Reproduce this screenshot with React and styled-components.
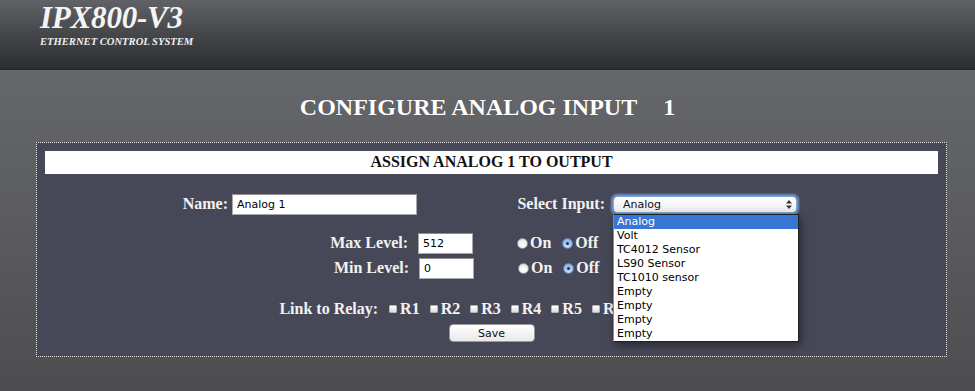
import React from 'react'
import styled, { createGlobalStyle } from 'styled-components'

const GlobalStyle = createGlobalStyle`
	html, body {
		margin: 0;
		padding: 0;
	}
	body {
		width: 975px;
		height: 391px;
		overflow: hidden;
		font-family: 'Liberation Serif', 'Times New Roman', serif;
		background: linear-gradient(to bottom, #6b6c71 0px, #5e5f63 180px, #4d4d4f 391px);
	}
`

const OPTIONS = ['Analog', 'Volt', 'TC4012 Sensor', 'LS90 Sensor', 'TC1010 sensor', 'Empty', 'Empty', 'Empty', 'Empty']
const RELAYS = ['R1', 'R2', 'R3', 'R4', 'R5', 'R6', 'R7', 'R8']

const App = () => {
	return (
		<Page>
			<GlobalStyle />
			<Header>
				<Logo>IPX800-V3</Logo>
				<Tagline>ETHERNET CONTROL SYSTEM</Tagline>
			</Header>
			<Title>
				CONFIGURE ANALOG INPUT<TitleNumber>1</TitleNumber>
			</Title>
			<Panel>
				<PanelBar>ASSIGN ANALOG 1 TO OUTPUT</PanelBar>
				<NameRow>
					<Label width={183}>Name:</Label>
					<TextInput width={185} defaultValue='Analog 1' />
					<Label width={188}>Select Input:</Label>
					<SelectWrap>
						<SelectBox>
							<span>Analog</span>
							<SelectArrows>
								<svg width='6' height='9' viewBox='0 0 6 9'>
									<path d='M3 0 L6 3.5 H0 Z M3 9 L6 5.5 H0 Z' fill='#333' />
								</svg>
							</SelectArrows>
						</SelectBox>
						<OptionList>
							{OPTIONS.map((o, i) => (
								<OptionItem key={i} selected={i === 0}>
									{o}
								</OptionItem>
							))}
						</OptionList>
					</SelectWrap>
				</NameRow>
				<LevelRow>
					<Label width={363}>Max Level:</Label>
					<TextInput width={55} defaultValue='512' />
					<RadioGroup>
						<RadioLabel>
							<Radio />
							On
						</RadioLabel>
						<RadioLabel>
							<Radio checked />
							Off
						</RadioLabel>
					</RadioGroup>
				</LevelRow>
				<LevelRow shift={1}>
					<Label width={363}>Min Level:</Label>
					<TextInput width={55} defaultValue='0' />
					<RadioGroup>
						<RadioLabel>
							<Radio />
							On
						</RadioLabel>
						<RadioLabel>
							<Radio checked />
							Off
						</RadioLabel>
					</RadioGroup>
				</LevelRow>
				<RelayRow>
					<RelayTitle>Link to Relay:</RelayTitle>
					{RELAYS.map(r => (
						<RelayItem key={r}>
							<CheckBox />
							{r}
						</RelayItem>
					))}
				</RelayRow>
				<ButtonRow>
					<SaveButton>Save</SaveButton>
				</ButtonRow>
			</Panel>
		</Page>
	)
}

export default App

// STYLED COMPONENTS
const Page = styled.div`
	width: 975px;
	height: 391px;
	color: #fff;
`
const Header = styled.div`
	height: 70px;
	box-sizing: border-box;
	padding: 2px 0 0 40px;
	background: linear-gradient(to bottom, #606267 0%, #47494d 45%, #2c2d30 100%);
	border-bottom: 1px solid #26272a;
`
const Logo = styled.div`
	font-family: 'Liberation Serif', serif;
	font-style: italic;
	font-weight: 700;
	font-size: 31px;
	line-height: 32px;
	letter-spacing: -0.2px;
	color: #f4f4f4;
`
const Tagline = styled.div`
	font-family: 'Liberation Serif', serif;
	font-style: italic;
	font-weight: 700;
	font-size: 10.6px;
	line-height: 12px;
	margin-top: 2px;
	color: #f0f0f0;
`
const Title = styled.h1`
	margin: 0;
	padding: 23px 0 0;
	height: 72px;
	box-sizing: border-box;
	text-align: center;
	font-size: 24px;
	font-weight: 700;
	line-height: 28px;
	color: #fff;
	text-shadow: 0 0 1px rgba(0, 0, 0, 0.3);
`
const TitleNumber = styled.span`
	margin-left: 26px;
`
const Panel = styled.div`
	margin: 0 28px 0 36px;
	height: 215px;
	box-sizing: border-box;
	border: 1px dotted #e8e8e8;
	background: #474857;
	padding: 8px 8px 0;
`
const PanelBar = styled.div`
	background: #fff;
	height: 23px;
	line-height: 22px;
	text-align: center;
	color: #111;
	font-weight: 700;
	font-size: 16px;
`
const NameRow = styled.div`
	display: flex;
	align-items: center;
	margin-top: 19px;
	height: 22px;
`
const LevelRow = styled.div`
	display: flex;
	align-items: center;
	margin-top: ${p => (p.shift ? 3 : 17)}px;
	height: 22px;
	padding-left: ${p => p.shift || 0}px;
`
const Label = styled.div`
	width: ${p => p.width}px;
	text-align: right;
	font-weight: 700;
	font-size: 16px;
	margin-right: ${p => (p.width > 300 ? 10 : p.width > 185 ? 8 : 4)}px;
	color: #f2f2f2;
`
const TextInput = styled.input`
	width: ${p => p.width}px;
	height: 21px;
	box-sizing: border-box;
	border: 1px solid #a8a8a8;
	border-top-color: #8e8e8e;
	background: #fff;
	padding: 0 4px;
	font-family: 'DejaVu Sans', sans-serif;
	font-size: 11px;
	color: #000;
	outline: none;
`
const SelectWrap = styled.div`
	position: relative;
	width: 184px;
`
const SelectBox = styled.div`
	height: 17px;
	box-sizing: border-box;
	display: flex;
	align-items: center;
	justify-content: space-between;
	padding: 0 4px 0 9px;
	border-radius: 4px;
	border: 1px solid #7aa7e0;
	background: linear-gradient(to bottom, #ffffff, #ececec);
	box-shadow: 0 0 2px 2px rgba(130, 170, 230, 0.75);
	font-family: 'DejaVu Sans', sans-serif;
	font-size: 11px;
	color: #111;
`
const SelectArrows = styled.span`
	display: flex;
	align-items: center;
`
const OptionList = styled.div`
	position: absolute;
	left: 0;
	top: 18px;
	width: 186px;
	box-sizing: border-box;
	background: #fff;
	border: 1px solid #222;
	border-left-color: #8c8c8c;
	box-shadow: 2px 3px 8px rgba(0, 0, 0, 0.45);
	z-index: 5;
`
const OptionItem = styled.div`
	height: 14px;
	line-height: 14px;
	padding-left: 3px;
	font-family: 'DejaVu Sans', sans-serif;
	font-size: 11px;
	color: ${p => (p.selected ? '#fff' : '#000')};
	background: ${p => (p.selected ? '#3876d6' : 'transparent')};
`
const RadioGroup = styled.div`
	display: flex;
	align-items: center;
	gap: 11px;
	margin-left: 44px;
`
const RadioLabel = styled.label`
	display: flex;
	align-items: center;
	font-weight: 700;
	font-size: 16px;
	color: #f2f2f2;
`
const Radio = styled.span`
	width: 11px;
	height: 11px;
	box-sizing: border-box;
	border-radius: 50%;
	margin-right: 2px;
	display: flex;
	align-items: center;
	justify-content: center;
	background: ${p =>
		p.checked
			? 'radial-gradient(circle at 50% 70%, #cfe3fb 0%, #8ab6ec 70%, #6c9ddf 100%)'
			: 'radial-gradient(circle at 50% 70%, #ffffff 0%, #eeeeee 60%, #c8c8c8 100%)'};
	border: 1px solid ${p => (p.checked ? '#5d86c0' : '#9a9a9a')};
	&::after {
		content: '';
		display: ${p => (p.checked ? 'block' : 'none')};
		width: 3px;
		height: 3px;
		border-radius: 50%;
		background: #1d2a3a;
	}
`
const RelayRow = styled.div`
	display: flex;
	align-items: center;
	justify-content: center;
	gap: 10px;
	margin-top: 19px;
	height: 22px;
	font-weight: 700;
	font-size: 16px;
	color: #f2f2f2;
`
const RelayTitle = styled.span`
	margin-right: 1px;
`
const RelayItem = styled.span`
	display: flex;
	align-items: center;
	gap: 3px;
`
const CheckBox = styled.span`
	width: 6px;
	height: 6px;
	border-radius: 1px;
	background: linear-gradient(to bottom, #ffffff, #dcdcdc);
	border: 1px solid #b5b5b5;
`
const ButtonRow = styled.div`
	display: flex;
	justify-content: center;
	margin-top: 4px;
`
const SaveButton = styled.button`
	width: 86px;
	height: 18px;
	padding: 0;
	border-radius: 4px;
	border: 1px solid #9a9a9a;
	background: linear-gradient(to bottom, #ffffff, #e9e9e9);
	font-family: 'DejaVu Sans', sans-serif;
	font-size: 11px;
	color: #111;
`
